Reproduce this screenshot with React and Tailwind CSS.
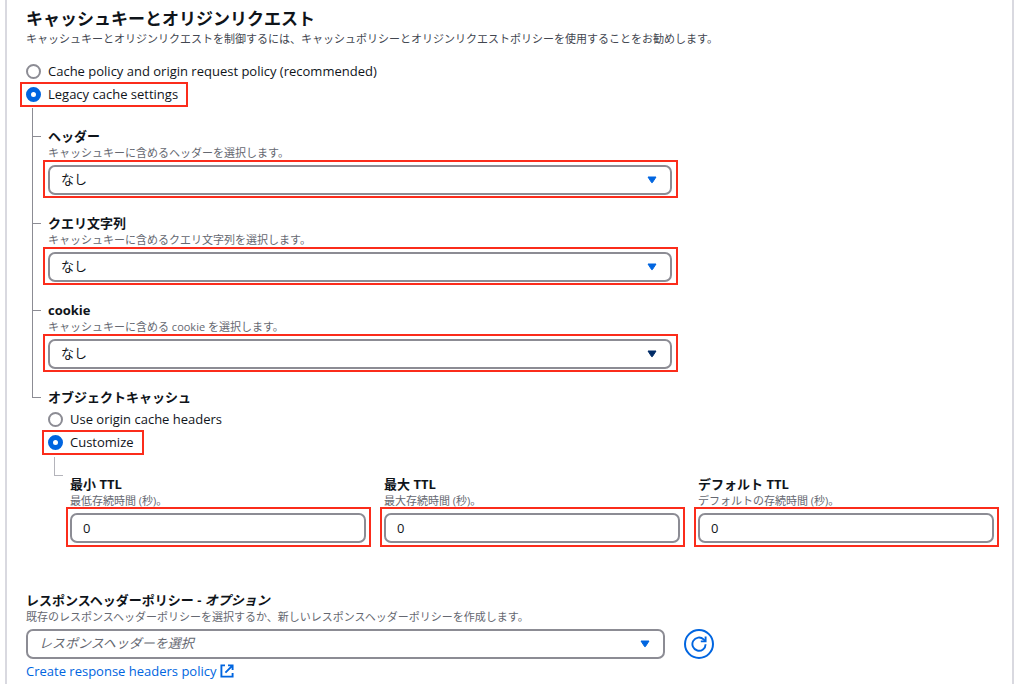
import React, { useState } from "react";

function Highlight({ className }) {
  return <span aria-hidden="true" className={`pointer-events-none absolute border-2 border-[#fb2c1b] ${className}`} />;
}

function Radio({ name, value, selected, onSelect, highlighted, children }) {
  return (
    <div className="relative w-fit">
      <label className="flex h-[22px] items-center gap-[7px] text-[13px]">
        <input
          type="radio"
          name={name}
          value={value}
          checked={selected === value}
          onChange={() => onSelect(value)}
          className="size-[15px] shrink-0 appearance-none rounded-full border-2 border-[#8c8c94] bg-white checked:border-[5px] checked:border-[#0065e0]"
        />
        <span className="pt-px">{children}</span>
      </label>
      {highlighted && <Highlight className="-top-px -right-2.5 -bottom-0.5 -left-1.5" />}
    </div>
  );
}

function Label({ id, children }) {
  return (
    <label htmlFor={id} className="block text-[13px] leading-[18px] font-bold">
      {children}
    </label>
  );
}

function Hint({ children }) {
  return <p className="text-[11px] leading-4 text-[#656871]">{children}</p>;
}

function Select({ id, children, selectClass = "", arrowClass = "text-[#0065e0]", highlighted }) {
  return (
    <div className="relative mt-1 w-[66%]">
      <select
        id={id}
        className={`block h-[30px] w-full appearance-none rounded-[7px] border-2 border-[#8c8c94] bg-white px-[11px] text-[13px] ${selectClass}`}
      >
        {children}
      </select>
      <svg viewBox="0 0 10 8" className={`pointer-events-none absolute top-[11px] right-[15px] h-2 w-2.5 ${arrowClass}`}>
        <path d="M1 1h8L5.4 6.6h-.8z" fill="currentColor" stroke="currentColor" strokeWidth="1" strokeLinejoin="round" />
      </svg>
      {highlighted && <Highlight className="-right-1.5 -left-[5px] -top-[5px] -bottom-[3px]" />}
    </div>
  );
}

function Branch({ last, children }) {
  return (
    <div className="flex">
      <div className="flex w-[22px] shrink-0 flex-col pl-1.5">
        <div className="h-[29px] w-[9px] border-b border-l border-[#8c8c94]" />
        {!last && <div className="w-px flex-1 bg-[#8c8c94]" />}
      </div>
      <div className="min-w-0 flex-1 pt-[19px]">{children}</div>
    </div>
  );
}

function NumberField({ id, label, hint }) {
  return (
    <div className="min-w-0">
      <Label id={id}>{label}</Label>
      <Hint>{hint}</Hint>
      <div className="relative mt-1">
        <input
          id={id}
          type="text"
          inputMode="numeric"
          defaultValue="0"
          className="block h-[30px] w-full rounded-[7px] border-2 border-[#8c8c94] bg-white px-[11px] text-[13px]"
        />
        <Highlight className="-right-[5px] -left-1 -top-1.5 -bottom-1" />
      </div>
    </div>
  );
}

const fields = [
  { id: "headers", label: "ヘッダー", hint: "キャッシュキーに含めるヘッダーを選択します。" },
  { id: "query", label: "クエリ文字列", hint: "キャッシュキーに含めるクエリ文字列を選択します。" },
  { id: "cookie", label: "cookie", hint: "キャッシュキーに含める cookie を選択します。", arrow: "text-[#002b66]" },
];

export default function App() {
  const [policy, setPolicy] = useState("legacy");
  const [caching, setCaching] = useState("customize");

  return (
    <main className="min-h-screen bg-white pr-2.5 pl-[5px] font-['Open_Sans','Noto_Sans_CJK_JP',sans-serif] text-[#0f141a]">
      <section className="min-h-screen border-x-2 border-[#d9d9e0] pt-2 pr-[18px] pl-[19px]">
        <h2 className="text-[17px] leading-[22px] font-bold">キャッシュキーとオリジンリクエスト</h2>
        <p className="text-[11px] leading-[18px] text-[#424650]">
          キャッシュキーとオリジンリクエストを制御するには、キャッシュポリシーとオリジンリクエストポリシーを使用することをお勧めします。
        </p>

        <div role="radiogroup" aria-label="キャッシュキーとオリジンリクエスト" className="mt-3 flex flex-col gap-px">
          <Radio name="policy" value="recommended" selected={policy} onSelect={setPolicy}>
            Cache policy and origin request policy (recommended)
          </Radio>
          <Radio name="policy" value="legacy" selected={policy} onSelect={setPolicy} highlighted>
            Legacy cache settings
          </Radio>
        </div>

        <div className="mt-[3px]">
          {fields.map((f) => (
            <Branch key={f.id}>
              <Label id={f.id}>{f.label}</Label>
              <Hint>{f.hint}</Hint>
              <Select id={f.id} arrowClass={f.arrow} highlighted>
                <option>なし</option>
              </Select>
            </Branch>
          ))}
          <Branch last>
            <h3 id="object-caching" className="text-[13px] leading-[18px] font-bold">
              オブジェクトキャッシュ
            </h3>
            <div role="radiogroup" aria-labelledby="object-caching" className="mt-0.5 flex flex-col gap-px">
              <Radio name="caching" value="origin" selected={caching} onSelect={setCaching}>
                Use origin cache headers
              </Radio>
              <Radio name="caching" value="customize" selected={caching} onSelect={setCaching} highlighted>
                Customize
              </Radio>
            </div>
            <div className="mt-1 flex">
              <div className="w-[22px] shrink-0 pl-1.5">
                <div className="h-[19px] w-[9px] border-b border-l border-[#b4b4bb]" />
              </div>
              <div className="grid min-w-0 flex-1 grid-cols-3 gap-[18px] pt-[18px]">
                <NumberField id="min-ttl" label="最小 TTL" hint="最低存続時間 (秒)。" />
                <NumberField id="max-ttl" label="最大 TTL" hint="最大存続時間 (秒)。" />
                <NumberField id="default-ttl" label="デフォルト TTL" hint="デフォルトの存続時間 (秒)。" />
              </div>
            </div>
          </Branch>
        </div>

        <div className="mt-12">
          <Label id="response-policy">
            レスポンスヘッダーポリシー - <i>オプション</i>
          </Label>
          <Hint>既存のレスポンスヘッダーポリシーを選択するか、新しいレスポンスヘッダーポリシーを作成します。</Hint>
          <div className="flex items-end gap-[19px]">
            <Select id="response-policy" selectClass="italic text-[#656871]">
              <option>レスポンスヘッダーを選択</option>
            </Select>
            <button
              type="button"
              aria-label="更新"
              className="flex size-[30px] shrink-0 items-center justify-center rounded-full border-2 border-[#0065e0] text-[#0065e0]"
            >
              <svg viewBox="0 0 16 16" className="size-4" fill="none" stroke="currentColor" strokeWidth="1.9">
                <path d="M14.6 8.2A6.6 6.6 0 1 1 12.6 3.4L14.4 5.2" />
                <path d="M14.6 .6v4.8H9.8" />
              </svg>
            </button>
          </div>
          <a href="#create" className="mt-[3px] flex w-fit items-center gap-1 text-[13px] leading-[18px] font-medium text-[#0065e0]">
            Create response headers policy
            <svg viewBox="0 0 14 14" className="size-3.5" fill="none" stroke="currentColor" strokeWidth="1.9">
              <path d="M5 1.4H1.4v11.2h11.2V9" />
              <path d="M8 1.4h4.6V6M12.4 1.6L5.4 8.6" />
            </svg>
          </a>
        </div>
      </section>
    </main>
  );
}
